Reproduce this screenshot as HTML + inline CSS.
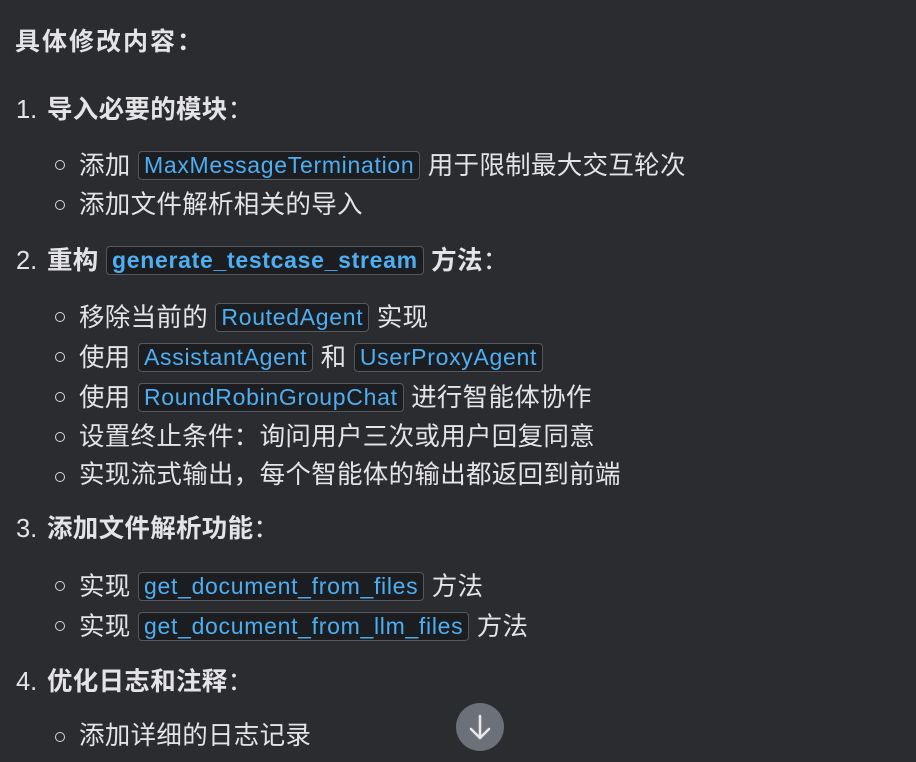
<!DOCTYPE html>
<html><head><meta charset="utf-8"><style>
html,body{margin:0;padding:0;background:#2b2c30;width:916px;height:762px;overflow:hidden}
body{font-family:"Liberation Sans","Noto Sans CJK SC",sans-serif;color:#e4e4e6;font-size:25.5px;position:relative}
.l{position:absolute;white-space:nowrap;line-height:28px;letter-spacing:0.3px}
.b{font-weight:bold}
.c{display:inline-block;background:#1c1d21;border:1px solid #55595f;border-radius:4px;color:#4eaef2;padding:0 5px;line-height:27px;font-size:23px;letter-spacing:0.7px;margin:0;vertical-align:1px}
.bul{position:absolute;width:8px;height:8px;border:1.5px solid #d8d8da;border-radius:50%}
.btn{position:absolute;left:456px;top:703px;width:48px;height:48px;border-radius:50%;background:#6c7079}
.n{display:inline-block;width:31px;letter-spacing:0}
</style></head><body>
<div class="l b" style="left:15px;top:28px;letter-spacing:2px;font-size:25px">具体修改内容：</div>

<div class="l" style="left:16px;top:96px"><span class="n">1.</span><b>导入必要的模块</b>：</div>
<div class="bul" style="left:55px;top:160px"></div>
<div class="l" style="left:79px;top:151px">添加 <span class="c">MaxMessageTermination</span> 用于限制最大交互轮次</div>
<div class="bul" style="left:55px;top:200px"></div>
<div class="l" style="left:79px;top:191px">添加文件解析相关的导入</div>

<div class="l" style="left:16px;top:246px"><span class="n">2.</span><b>重构 <span class="c" style="font-weight:bold">generate_testcase_stream</span> 方法</b>：</div>
<div class="bul" style="left:55px;top:312px"></div>
<div class="l" style="left:79px;top:303px">移除当前的 <span class="c">RoutedAgent</span> 实现</div>
<div class="bul" style="left:55px;top:352px"></div>
<div class="l" style="left:79px;top:343px">使用 <span class="c">AssistantAgent</span> 和 <span class="c">UserProxyAgent</span></div>
<div class="bul" style="left:55px;top:392px"></div>
<div class="l" style="left:79px;top:383px">使用 <span class="c">RoundRobinGroupChat</span> 进行智能体协作</div>
<div class="bul" style="left:55px;top:432px"></div>
<div class="l" style="left:79px;top:423px">设置终止条件：询问用户三次或用户回复同意</div>
<div class="bul" style="left:55px;top:472px"></div>
<div class="l" style="left:79px;top:461px">实现流式输出，每个智能体的输出都返回到前端</div>

<div class="l" style="left:16px;top:515px"><span class="n">3.</span><b>添加文件解析功能</b>：</div>
<div class="bul" style="left:55px;top:581px"></div>
<div class="l" style="left:79px;top:572px">实现 <span class="c">get_document_from_files</span> 方法</div>
<div class="bul" style="left:55px;top:621px"></div>
<div class="l" style="left:79px;top:612px">实现 <span class="c">get_document_from_llm_files</span> 方法</div>

<div class="l" style="left:16px;top:668px"><span class="n">4.</span><b>优化日志和注释</b>：</div>
<div class="bul" style="left:55px;top:732px"></div>
<div class="l" style="left:79px;top:722px">添加详细的日志记录</div>

<div class="btn"><svg width="48" height="48" viewBox="0 0 48 48"><path d="M24 13V35M15 26L24 35L33 26" stroke="#e8e8ea" stroke-width="2.6" fill="none" stroke-linecap="round" stroke-linejoin="round"/></svg></div>
</body></html>
